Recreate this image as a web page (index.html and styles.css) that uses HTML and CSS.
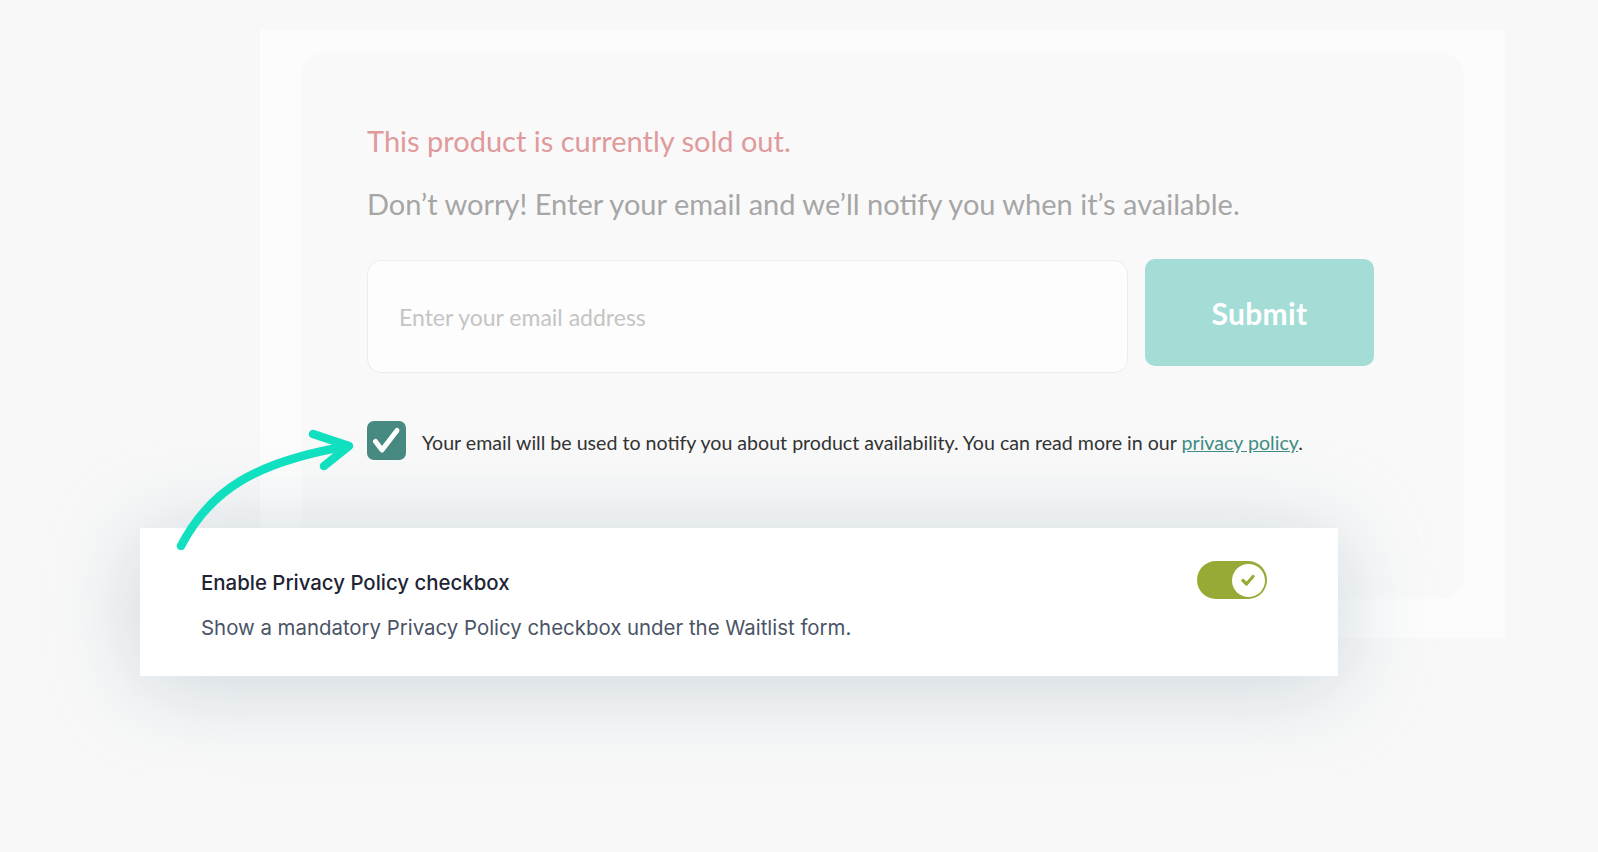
FILE: index.html
```html
<!DOCTYPE html>
<html lang="en">
<head>
<meta charset="utf-8">
<title>Waitlist privacy policy</title>
<link rel="stylesheet" href="styles.css">
</head>
<body>
<div class="stage">
  <div class="panel">
    <div class="card">
      <p class="headline">This product is currently sold out.</p>
      <p class="subline">Don’t worry! Enter your email and we’ll notify you when it’s available.</p>
      <div class="form-row">
        <div class="email-input">Enter your email address</div>
        <div class="submit-btn">Submit</div>
      </div>
      <div class="consent-row">
        <span class="checkbox">
          <svg width="39" height="39" viewBox="0 0 39 39"><path d="M8.5 20.5 L15 29 L30 9.5" fill="none" stroke="#fff" stroke-width="5" stroke-linecap="round" stroke-linejoin="round"/></svg>
        </span>
        <span class="consent-text">Your email will be used to notify you about product availability. You can read more in our <a class="policy-link" href="#">privacy policy</a>.</span>
      </div>
    </div>
  </div>

  <div class="settings-card">
    <div class="settings-text">
      <div class="settings-title">Enable Privacy Policy checkbox</div>
      <div class="settings-desc">Show a mandatory Privacy Policy checkbox under the Waitlist form.</div>
    </div>
    <span class="toggle">
      <span class="knob">
        <svg width="14" height="12" viewBox="0 0 14 12"><path d="M2 6.5 L5.5 10 L12 2.5" fill="none" stroke="#98aa36" stroke-width="3.2" stroke-linecap="round" stroke-linejoin="round"/></svg>
      </span>
    </span>
  </div>

  <svg class="arrow" width="200" height="140" viewBox="160 410 200 140">
    <path d="M181 546 C 210 490, 255 462, 348 446" fill="none" stroke="#10e0c0" stroke-width="8.5" stroke-linecap="round"/>
    <path d="M313 434 L349 446 L324 466" fill="none" stroke="#10e0c0" stroke-width="8.5" stroke-linecap="round" stroke-linejoin="round"/>
  </svg>
</div>
</body>
</html>
```

FILE: styles.css
```css
html, body {
  margin: 0;
  padding: 0;
}
body {
  background: #f8f8f8;
  font-family: "Lato", "Liberation Sans", sans-serif;
  overflow: hidden;
}
.stage {
  position: relative;
  width: 1598px;
  height: 852px;
  padding-top: 30px;
  box-sizing: border-box;
}
.panel {
  margin-left: 260px;
  width: 1245px;
  height: 608px;
  background: #fcfcfc;
  padding: 22px 41px 0 41px;
  box-sizing: border-box;
}
.card {
  width: 1163px;
  height: 547px;
  background: #f9f9f9;
  border-radius: 24px;
  padding: 69px 66px 0 66px;
  box-sizing: border-box;
}
.headline {
  margin: 0;
  font-size: 29px;
  line-height: 40px;
  color: #e09a9b;
}
.subline {
  margin: 23px 0 0 0;
  font-size: 29px;
  line-height: 40px;
  color: #a6a6a6;
}
.form-row {
  margin-top: 36px;
  display: flex;
  align-items: flex-start;
  gap: 17px;
}
.email-input {
  width: 761px;
  height: 113px;
  box-sizing: border-box;
  background: #fdfdfd;
  border: 1.5px solid #ececec;
  border-radius: 14px;
  padding-left: 31px;
  display: flex;
  align-items: center;
  font-size: 23px;
  color: #c4c4c4;
}
.submit-btn {
  width: 229px;
  height: 107px;
  margin-top: -1px;
  background: #a4dcd6;
  border-radius: 10px;
  display: flex;
  align-items: center;
  justify-content: center;
  color: #ffffff;
  font-weight: 700;
  font-size: 30px;
  letter-spacing: 0.3px;
}
.consent-row {
  margin-top: 48px;
  display: flex;
  align-items: center;
  gap: 16px;
}
.checkbox {
  width: 39px;
  height: 39px;
  border-radius: 7px;
  background: #478a82;
  display: flex;
  flex: none;
}
.consent-text {
  font-size: 19.6px;
  color: #333333;
  margin-top: 3px;
}
.policy-link {
  color: #3f8d85;
  text-decoration: underline;
}
.arrow {
  position: absolute;
  left: 160px;
  top: 410px;
}
.settings-card {
  position: absolute;
  left: 140px;
  top: 528px;
  width: 1198px;
  height: 148px;
  box-sizing: border-box;
  background: #ffffff;
  box-shadow: 0 8px 90px rgba(140, 168, 184, 0.42);
  padding: 33px 71px 0 61px;
  display: flex;
  justify-content: space-between;
  align-items: flex-start;
  font-family: "Inter", "Liberation Sans", sans-serif;
}
.settings-title {
  margin-top: 9px;
  font-size: 20.4px;
  font-weight: 500;
  line-height: 26px;
  color: #1e2433;
}
.settings-desc {
  margin-top: 19px;
  font-size: 20.4px;
  line-height: 26px;
  color: #4a5466;
}
.toggle {
  width: 70px;
  height: 38px;
  border-radius: 19px;
  background: #98aa36;
  display: flex;
  justify-content: flex-end;
  align-items: center;
  flex: none;
}
.knob {
  width: 33px;
  height: 33px;
  margin-right: 2.5px;
  border-radius: 50%;
  background: #ffffff;
  display: flex;
  align-items: center;
  justify-content: center;
}
```
